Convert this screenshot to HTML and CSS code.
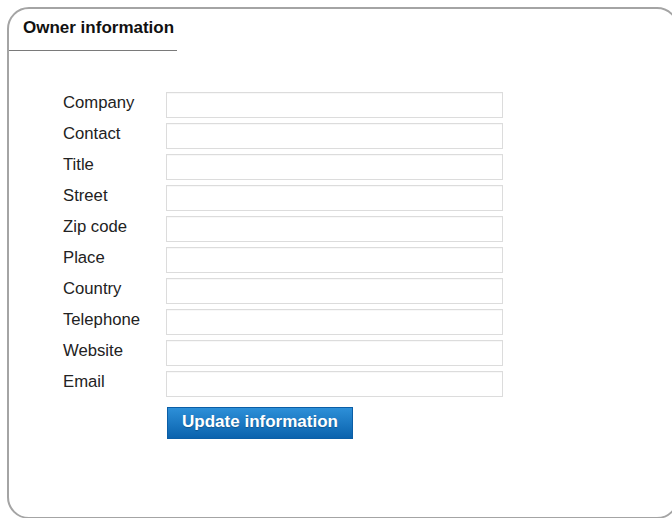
FILE: index.html
```html
<!DOCTYPE html>
<html lang="en">
<head>
<meta charset="utf-8">
<title>Owner information</title>
<link rel="stylesheet" href="styles.css">
</head>
<body>
<section class="panel">
  <h2 class="panel-head">Owner information</h2>
  <form class="owner-form">
    <label class="field-label" for="company">Company</label>
    <input class="field-input" id="company" type="text">
    <label class="field-label" for="contact">Contact</label>
    <input class="field-input" id="contact" type="text">
    <label class="field-label" for="title">Title</label>
    <input class="field-input" id="title" type="text">
    <label class="field-label" for="street">Street</label>
    <input class="field-input" id="street" type="text">
    <label class="field-label" for="zip">Zip code</label>
    <input class="field-input" id="zip" type="text">
    <label class="field-label" for="place">Place</label>
    <input class="field-input" id="place" type="text">
    <label class="field-label" for="country">Country</label>
    <input class="field-input" id="country" type="text">
    <label class="field-label" for="phone">Telephone</label>
    <input class="field-input" id="phone" type="text">
    <label class="field-label" for="website">Website</label>
    <input class="field-input" id="website" type="text">
    <label class="field-label" for="email">Email</label>
    <input class="field-input" id="email" type="text">
    <button class="update-btn" type="button">Update information</button>
  </form>
</section>
</body>
</html>
```
FILE: styles.css
```css
html, body {
  margin: 0;
  padding: 0;
  background: #fff;
  overflow: hidden;
}

body {
  font-family: "Liberation Sans", Arial, sans-serif;
  color: #222;
}

/* rounded grey frame around the whole form */
.panel {
  box-sizing: border-box;
  margin: 7px 0 0 7px;
  width: 672px;
  height: 512px;
  border: 2px solid #a4a4a4;
  border-radius: 22px;
}

.panel-head {
  box-sizing: border-box;
  width: 168px;
  margin: 0;
  padding: 10px 0 13px 14px;
  font-size: 17px;
  line-height: 18px;
  font-weight: bold;
  color: #111;
  border-bottom: 1px solid #7a7a7a;
  white-space: nowrap;
}

.owner-form {
  display: grid;
  grid-template-columns: 103px 337px;
  grid-auto-rows: 26px;
  row-gap: 5px;
  margin: 41px 0 0 54px;
}

.field-label {
  font-size: 16.7px;
  line-height: 22px;
  padding: 0 0 4px;
  color: #222;
}

.field-input {
  box-sizing: border-box;
  width: 337px;
  height: 26px;
  margin: 0;
  border: 1px solid #dcdcdc;
  background: #fff;
  box-shadow: inset 0 1px 1px rgba(0, 0, 0, 0.03);
}

.update-btn {
  grid-column: 2;
  box-sizing: border-box;
  width: 186px;
  height: 32px;
  margin: 5px 0 0 1px;
  padding: 0 0 3px;
  border: 1px solid #0b5ea6;
  background: linear-gradient(#2d8fd8, #0a62ad);
  color: #fff;
  font-family: "Liberation Sans", Arial, sans-serif;
  font-size: 17px;
  font-weight: bold;
  text-shadow: 0 1px 1px rgba(0, 0, 0, 0.25);
}
```
